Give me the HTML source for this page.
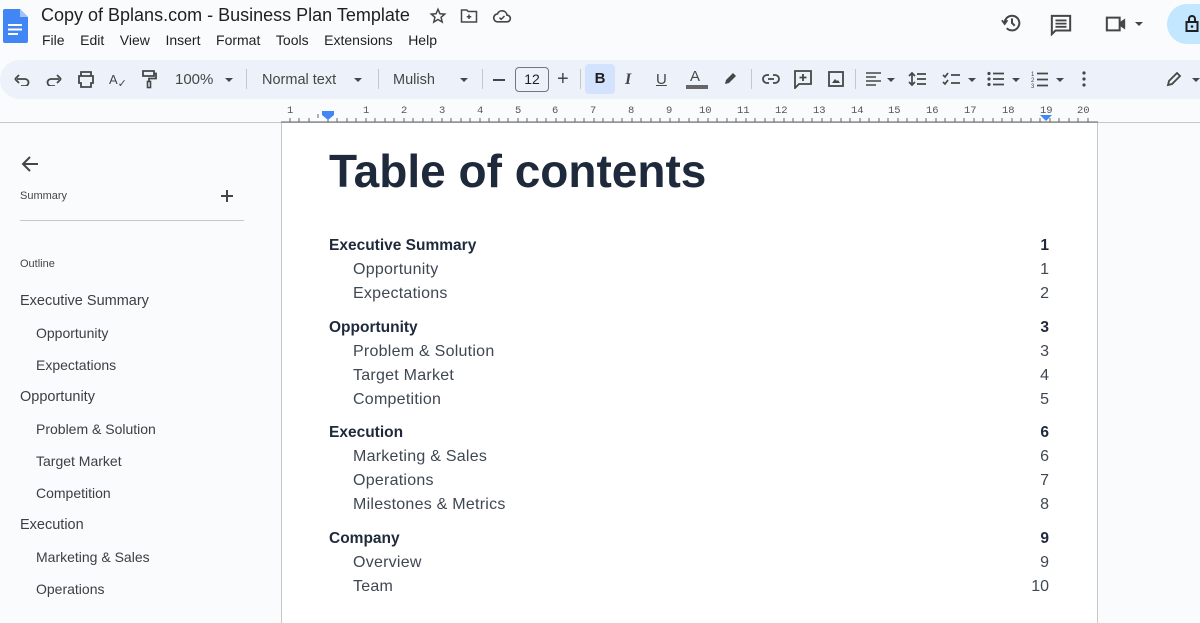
<!DOCTYPE html>
<html><head><meta charset="utf-8"><style>
*{margin:0;padding:0;box-sizing:border-box}
body{width:1200px;height:600px;overflow:hidden;background:#f9fbfd;font-family:"Liberation Sans",sans-serif;position:relative;color:#1f1f1f}
.a{position:absolute;white-space:nowrap}
.tb{position:absolute;left:0;top:60px;width:1220px;height:39px;background:#edf2fa;border-radius:20px}
.ti{position:absolute;top:0;height:39px;display:flex;align-items:center;font-size:14px;color:#444746}
.sep{position:absolute;top:69px;width:1px;height:20px;background:#c7c7c7}
.caret{display:inline-block;width:0;height:0;border-left:4px solid transparent;border-right:4px solid transparent;border-top:4px solid #444746}
.page{position:absolute;left:281px;top:123px;width:817px;height:500px;background:#fff;border-left:1px solid #c7c7c7;border-right:1px solid #c7c7c7}
.toc{position:absolute;left:329px;width:720px;font-size:16px;color:#1e293b}
.toc div{position:absolute;left:0;width:720px;height:24px;line-height:24px}
.toc .h{font-weight:bold;font-size:15.5px;color:#1e293b}
.toc .s{padding-left:24px;color:#3f4752;letter-spacing:.25px}
.toc b,.toc i{position:absolute;right:0;font-style:normal}
.toc .s i{letter-spacing:0}
.side{position:absolute;left:20px;font-size:14px;color:#3c4043}
.side div{position:absolute;white-space:nowrap}
.ruler{position:absolute;left:281px;top:104px;width:817px;height:19px;font-family:"Liberation Mono",monospace;font-size:10.5px;color:#555}
</style></head><body>
<svg class="a" style="left:3px;top:9px" width="25" height="34" viewBox="0 0 25 34"><path d="M2 0h15l8 8v24a2 2 0 0 1-2 2H2a2 2 0 0 1-2-2V2a2 2 0 0 1 2-2z" fill="#4285f4"/><path d="M17 0v8h8z" fill="#a1c2fa"/><rect x="5" y="15" width="14" height="2" fill="#fff"/><rect x="5" y="19.5" width="14" height="2" fill="#fff"/><rect x="5" y="24" width="10" height="2" fill="#fff"/></svg>
<div class="a" style="left:41px;top:5px;font-size:18px;color:#1f1f1f">Copy of Bplans.com - Business Plan Template</div>
<svg class="a" style="left:429px;top:7px" width="18" height="18" viewBox="0 0 24 24"><path d="M12 3l2.6 6 6.4.5-4.9 4.2 1.5 6.3L12 16.6 6.4 20l1.5-6.3L3 9.5 9.4 9z" fill="none" stroke="#444746" stroke-width="2"/></svg>
<svg class="a" style="left:460px;top:8px" width="18" height="16" viewBox="0 0 24 20"><path d="M2 2h7l2 2h11v14H2z" fill="none" stroke="#444746" stroke-width="2"/><path d="M12 8v6M9 11h6" stroke="#444746" stroke-width="2"/></svg>
<svg class="a" style="left:492px;top:8px" width="20" height="16" viewBox="0 0 24 18"><path d="M6 16h12a4 4 0 0 0 0-8 6 6 0 0 0-11.5-1.5A4.8 4.8 0 0 0 6 16z" fill="none" stroke="#444746" stroke-width="2"/><path d="M9 11l2 2 4-4" fill="none" stroke="#444746" stroke-width="1.8"/></svg>
<div class="a" style="left:42px;top:32px;font-size:14px;color:#1f1f1f">File&nbsp;&nbsp;&nbsp;&nbsp;Edit&nbsp;&nbsp;&nbsp;&nbsp;View&nbsp;&nbsp;&nbsp;&nbsp;Insert&nbsp;&nbsp;&nbsp;&nbsp;Format&nbsp;&nbsp;&nbsp;&nbsp;Tools&nbsp;&nbsp;&nbsp;&nbsp;Extensions&nbsp;&nbsp;&nbsp;&nbsp;Help</div>
<svg class="a" style="left:1001px;top:12px" width="22" height="22" viewBox="0 0 24 24"><path d="M4 12a8 8 0 1 1 2.3 5.7" fill="none" stroke="#444746" stroke-width="2.2"/><path d="M1 9l3 4 3-4" fill="none" stroke="#444746" stroke-width="2"/><path d="M12 7v5l3 3" fill="none" stroke="#444746" stroke-width="2.2"/></svg>
<svg class="a" style="left:1050px;top:14px" width="22" height="22" viewBox="0 0 24 24"><path d="M2 2h20v16H6l-4 4z" fill="none" stroke="#444746" stroke-width="2.2"/><path d="M6 7h12M6 10.5h12M6 14h12" stroke="#444746" stroke-width="2"/></svg>
<svg class="a" style="left:1105px;top:15px" width="22" height="18" viewBox="0 0 24 18"><path d="M2 2h14v14H2z" fill="none" stroke="#444746" stroke-width="2.2"/><path d="M16 7l6-4v12l-6-4z" fill="#444746"/></svg>
<span class="a caret" style="left:1135px;top:22px"></span>
<div class="a" style="left:1167px;top:4px;width:60px;height:40px;border-radius:20px;background:#c2e7ff"></div>
<svg class="a" style="left:1185px;top:14px" width="14" height="18" viewBox="0 0 14 18"><rect x="1.5" y="8" width="11" height="9" fill="none" stroke="#1f1f1f" stroke-width="2"/><path d="M4 8V5a3 3 0 0 1 6 0v3" fill="none" stroke="#1f1f1f" stroke-width="2"/><circle cx="7" cy="12.5" r="1.3" fill="#1f1f1f"/></svg>
<div class="tb">
 <svg class="a" style="left:14px;top:12px" width="16" height="14" viewBox="0 0 16 14"><path d="M3 7h8a3.5 3.5 0 0 1 0 7H7" fill="none" stroke="#444746" stroke-width="1.8"/><path d="M1 7l4-4M1 7l4 4" fill="none" stroke="#444746" stroke-width="1.8"/></svg>
 <svg class="a" style="left:46px;top:12px" width="16" height="14" viewBox="0 0 16 14"><path d="M13 7H5a3.5 3.5 0 0 0 0 7h4" fill="none" stroke="#444746" stroke-width="1.8"/><path d="M15 7l-4-4M15 7l-4 4" fill="none" stroke="#444746" stroke-width="1.8"/></svg>
 <svg class="a" style="left:77px;top:11px" width="18" height="17" viewBox="0 0 18 17"><path d="M4 5V1h10v4M2 5h14v7h-2v4H4v-4H2z" fill="none" stroke="#444746" stroke-width="1.8"/></svg>
 <div class="ti" style="left:109px;font-size:13px">A<span style="font-size:11px;margin-top:8px">&#x2713;</span></div>
 <svg class="a" style="left:141px;top:10px" width="16" height="19" viewBox="0 0 16 19"><path d="M2 1h11v5H2zM13 3.5h2v5H8v3" fill="none" stroke="#444746" stroke-width="1.8"/><rect x="6.5" y="11.5" width="3" height="6" fill="none" stroke="#444746" stroke-width="1.6"/></svg>
 <div class="ti" style="left:175px;font-size:15px">100%</div><span class="a caret" style="left:225px;top:18px"></span>
 <div class="ti" style="left:262px;font-size:14.5px">Normal text</div><span class="a caret" style="left:354px;top:18px"></span>
 <div class="ti" style="left:393px;font-size:14.5px">Mulish</div><span class="a caret" style="left:460px;top:18px"></span>
 <div class="a" style="left:493px;top:19px;width:12px;height:1.8px;background:#444746"></div>
 <div class="a" style="left:515px;top:7px;width:34px;height:25px;border:1px solid #747775;border-radius:4px;font-size:14px;color:#1f1f1f;text-align:center;line-height:23px">12</div>
 <div class="ti" style="left:557px;font-size:20px">+</div>
 <div class="a" style="left:585px;top:4px;width:30px;height:30px;border-radius:4px;background:#d3e3fd;font-weight:bold;font-size:15px;text-align:center;line-height:30px;color:#1f1f1f">B</div>
 <div class="ti" style="left:625px;font-size:16px;font-family:'Liberation Serif',serif;font-style:italic;font-weight:bold">I</div>
 <div class="ti" style="left:656px;font-size:15px;text-decoration:underline">U</div>
 <div class="ti" style="left:690px;font-size:15px;top:-3px">A</div><div class="a" style="left:686px;top:25px;width:22px;height:4px;background:#666"></div>
 <svg class="a" style="left:722px;top:10px" width="17" height="17" viewBox="0 0 17 17"><path d="M3 14l1-4 7-7 3 3-7 7z" fill="#444746"/></svg>
 <svg class="a" style="left:762px;top:12px" width="18" height="14" viewBox="0 0 18 14"><path d="M7 3H5a4 4 0 0 0 0 8h2M11 3h2a4 4 0 0 1 0 8h-2M6 7h6" fill="none" stroke="#444746" stroke-width="1.8"/></svg>
 <svg class="a" style="left:794px;top:10px" width="18" height="19" viewBox="0 0 18 19"><path d="M1 1h16v13H5l-4 4z" fill="none" stroke="#444746" stroke-width="1.8"/><path d="M9 4v7M5.5 7.5h7" stroke="#444746" stroke-width="1.8"/></svg>
 <svg class="a" style="left:828px;top:11px" width="16" height="16" viewBox="0 0 16 16"><rect x="1" y="1" width="14" height="14" fill="none" stroke="#444746" stroke-width="1.8"/><path d="M4 12l3-4 2 2 1-1 2 3z" fill="#444746"/></svg>
 <svg class="a" style="left:866px;top:12px" width="15" height="14" viewBox="0 0 15 14"><path d="M0 1h15M0 5h10M0 9h15M0 13h10" stroke="#444746" stroke-width="1.6"/></svg><span class="a caret" style="left:887px;top:18px"></span>
 <svg class="a" style="left:908px;top:11px" width="18" height="16" viewBox="0 0 18 16"><path d="M4 2v12M1 5l3-3 3 3M1 11l3 3 3-3M9 3h9M9 8h9M9 13h9" fill="none" stroke="#444746" stroke-width="1.7"/></svg>
 <svg class="a" style="left:942px;top:11px" width="18" height="16" viewBox="0 0 18 16"><path d="M1 4l2 2 3-4M1 11l2 2 3-4M9 4h9M9 12h9" fill="none" stroke="#444746" stroke-width="1.7"/></svg><span class="a caret" style="left:968px;top:18px"></span>
 <svg class="a" style="left:987px;top:11px" width="17" height="16" viewBox="0 0 17 16"><circle cx="2" cy="2.5" r="1.6" fill="#444746"/><circle cx="2" cy="8" r="1.6" fill="#444746"/><circle cx="2" cy="13.5" r="1.6" fill="#444746"/><path d="M6 2.5h11M6 8h11M6 13.5h11" stroke="#444746" stroke-width="1.7"/></svg><span class="a caret" style="left:1012px;top:18px"></span>
 <svg class="a" style="left:1031px;top:10px" width="17" height="18" viewBox="0 0 17 18"><text x="0" y="6" font-size="6" fill="#444746" font-family="Liberation Sans">1</text><text x="0" y="12" font-size="6" fill="#444746" font-family="Liberation Sans">2</text><text x="0" y="18" font-size="6" fill="#444746" font-family="Liberation Sans">3</text><path d="M6 3.5h11M6 9.5h11M6 15.5h11" stroke="#444746" stroke-width="1.7"/></svg><span class="a caret" style="left:1056px;top:18px"></span>
 <svg class="a" style="left:1082px;top:11px" width="4" height="16" viewBox="0 0 4 16"><circle cx="2" cy="2" r="1.6" fill="#444746"/><circle cx="2" cy="8" r="1.6" fill="#444746"/><circle cx="2" cy="14" r="1.6" fill="#444746"/></svg>
 <svg class="a" style="left:1166px;top:11px" width="16" height="16" viewBox="0 0 16 16"><path d="M2 14l1-4 8-8 3 3-8 8z" fill="none" stroke="#444746" stroke-width="1.8"/></svg><span class="a caret" style="left:1192px;top:18px"></span>
</div>
<div class="sep" style="left:246px"></div><div class="sep" style="left:378px"></div><div class="sep" style="left:482px"></div><div class="sep" style="left:580px"></div><div class="sep" style="left:751px"></div><div class="sep" style="left:855px"></div>
<div class="a" style="left:0;top:122px;width:1200px;height:1px;background:#c7c7c7"></div>
<div class="ruler">
<svg width="817" height="19" style="position:absolute;left:0;top:0">
<g stroke="#666"><path d="M0 18H817"/>
<path d="M9 14v4M18 14v4M28 14v4M37 10v4M47 14v4M56 14v4M66 14v4M75 14v4M85 14v4M94 14v4M104 14v4M113 14v4M123 14v4M132 14v4M142 14v4M151 14v4M161 14v4M170 14v4M180 14v4M189 14v4M199 14v4M208 14v4M218 14v4M227 14v4M237 14v4M246 14v4M256 14v4M265 14v4M275 14v4M284 14v4M294 14v4M303 14v4M313 14v4M322 14v4M332 14v4M341 14v4M351 14v4M360 14v4M370 14v4M379 14v4M389 14v4M398 14v4M408 14v4M417 14v4M427 14v4M436 14v4M446 14v4M455 14v4M465 14v4M474 14v4M484 14v4M493 14v4M503 14v4M512 14v4M522 14v4M531 14v4M541 14v4M550 14v4M560 14v4M569 14v4M579 14v4M588 14v4M598 14v4M607 14v4M617 14v4M626 14v4M636 14v4M645 14v4M655 14v4M664 14v4M674 14v4M683 14v4M693 14v4M702 14v4M712 14v4M721 14v4M731 14v4M740 14v4M750 14v4M759 14v4M769 14v4M778 14v4M788 14v4M797 14v4M807 14v4"/></g>
<path d="M41 7h12v4l-6 5-6-5z" fill="#4285f4"/>
<path d="M759 11h12l-6 6z" fill="#4285f4"/>
</svg>
<span class="a" style="left:6px;top:1px">1</span><span class="a" style="left:82px;top:1px">1</span><span class="a" style="left:120px;top:1px">2</span><span class="a" style="left:158px;top:1px">3</span><span class="a" style="left:196px;top:1px">4</span><span class="a" style="left:234px;top:1px">5</span><span class="a" style="left:271px;top:1px">6</span><span class="a" style="left:309px;top:1px">7</span><span class="a" style="left:347px;top:1px">8</span><span class="a" style="left:385px;top:1px">9</span><span class="a" style="left:418px;top:1px">10</span><span class="a" style="left:456px;top:1px">11</span><span class="a" style="left:494px;top:1px">12</span><span class="a" style="left:532px;top:1px">13</span><span class="a" style="left:570px;top:1px">14</span><span class="a" style="left:607px;top:1px">15</span><span class="a" style="left:645px;top:1px">16</span><span class="a" style="left:683px;top:1px">17</span><span class="a" style="left:721px;top:1px">18</span><span class="a" style="left:759px;top:1px">19</span><span class="a" style="left:796px;top:1px">20</span>
</div>
<svg class="a" style="left:21px;top:155px" width="18" height="18" viewBox="0 0 18 18"><path d="M17 9H2M9 2L2 9l7 7" fill="none" stroke="#444746" stroke-width="2"/></svg>
<div class="a" style="left:20px;top:190px;font-size:11px;color:#444746">Summary</div>
<svg class="a" style="left:221px;top:190px" width="12" height="12" viewBox="0 0 12 12"><path d="M6 0v12M0 6h12" stroke="#444746" stroke-width="2"/></svg>
<div class="a" style="left:20px;top:220px;width:224px;height:1px;background:#c7c7c7"></div>
<div class="a" style="left:20px;top:258px;font-size:11px;color:#444746">Outline</div>
<div class="side">
<div style="left:0;top:293px;font-size:14.5px">Executive Summary</div>
<div style="left:16px;top:325px">Opportunity</div>
<div style="left:16px;top:357px">Expectations</div>
<div style="left:0;top:389px;font-size:14.5px">Opportunity</div>
<div style="left:16px;top:421px">Problem &amp; Solution</div>
<div style="left:16px;top:453px">Target Market</div>
<div style="left:16px;top:485px">Competition</div>
<div style="left:0;top:517px;font-size:14.5px">Execution</div>
<div style="left:16px;top:549px">Marketing &amp; Sales</div>
<div style="left:16px;top:581px">Operations</div>
</div>
<div class="page"></div>
<div class="a" style="left:329px;top:144px;font-size:46px;font-weight:bold;color:#1e293b">Table of contents</div>
<div class="toc" style="top:234px">
<div class="h" style="top:0">Executive Summary<b>1</b></div>
<div class="s" style="top:24px">Opportunity<i>1</i></div>
<div class="s" style="top:48px">Expectations<i>2</i></div>
<div class="h" style="top:82px">Opportunity<b>3</b></div>
<div class="s" style="top:106px">Problem &amp; Solution<i>3</i></div>
<div class="s" style="top:130px">Target Market<i>4</i></div>
<div class="s" style="top:154px">Competition<i>5</i></div>
<div class="h" style="top:187px">Execution<b>6</b></div>
<div class="s" style="top:211px">Marketing &amp; Sales<i>6</i></div>
<div class="s" style="top:235px">Operations<i>7</i></div>
<div class="s" style="top:259px">Milestones &amp; Metrics<i>8</i></div>
<div class="h" style="top:293px">Company<b>9</b></div>
<div class="s" style="top:317px">Overview<i>9</i></div>
<div class="s" style="top:341px">Team<i>10</i></div>
</div>
</body></html>
